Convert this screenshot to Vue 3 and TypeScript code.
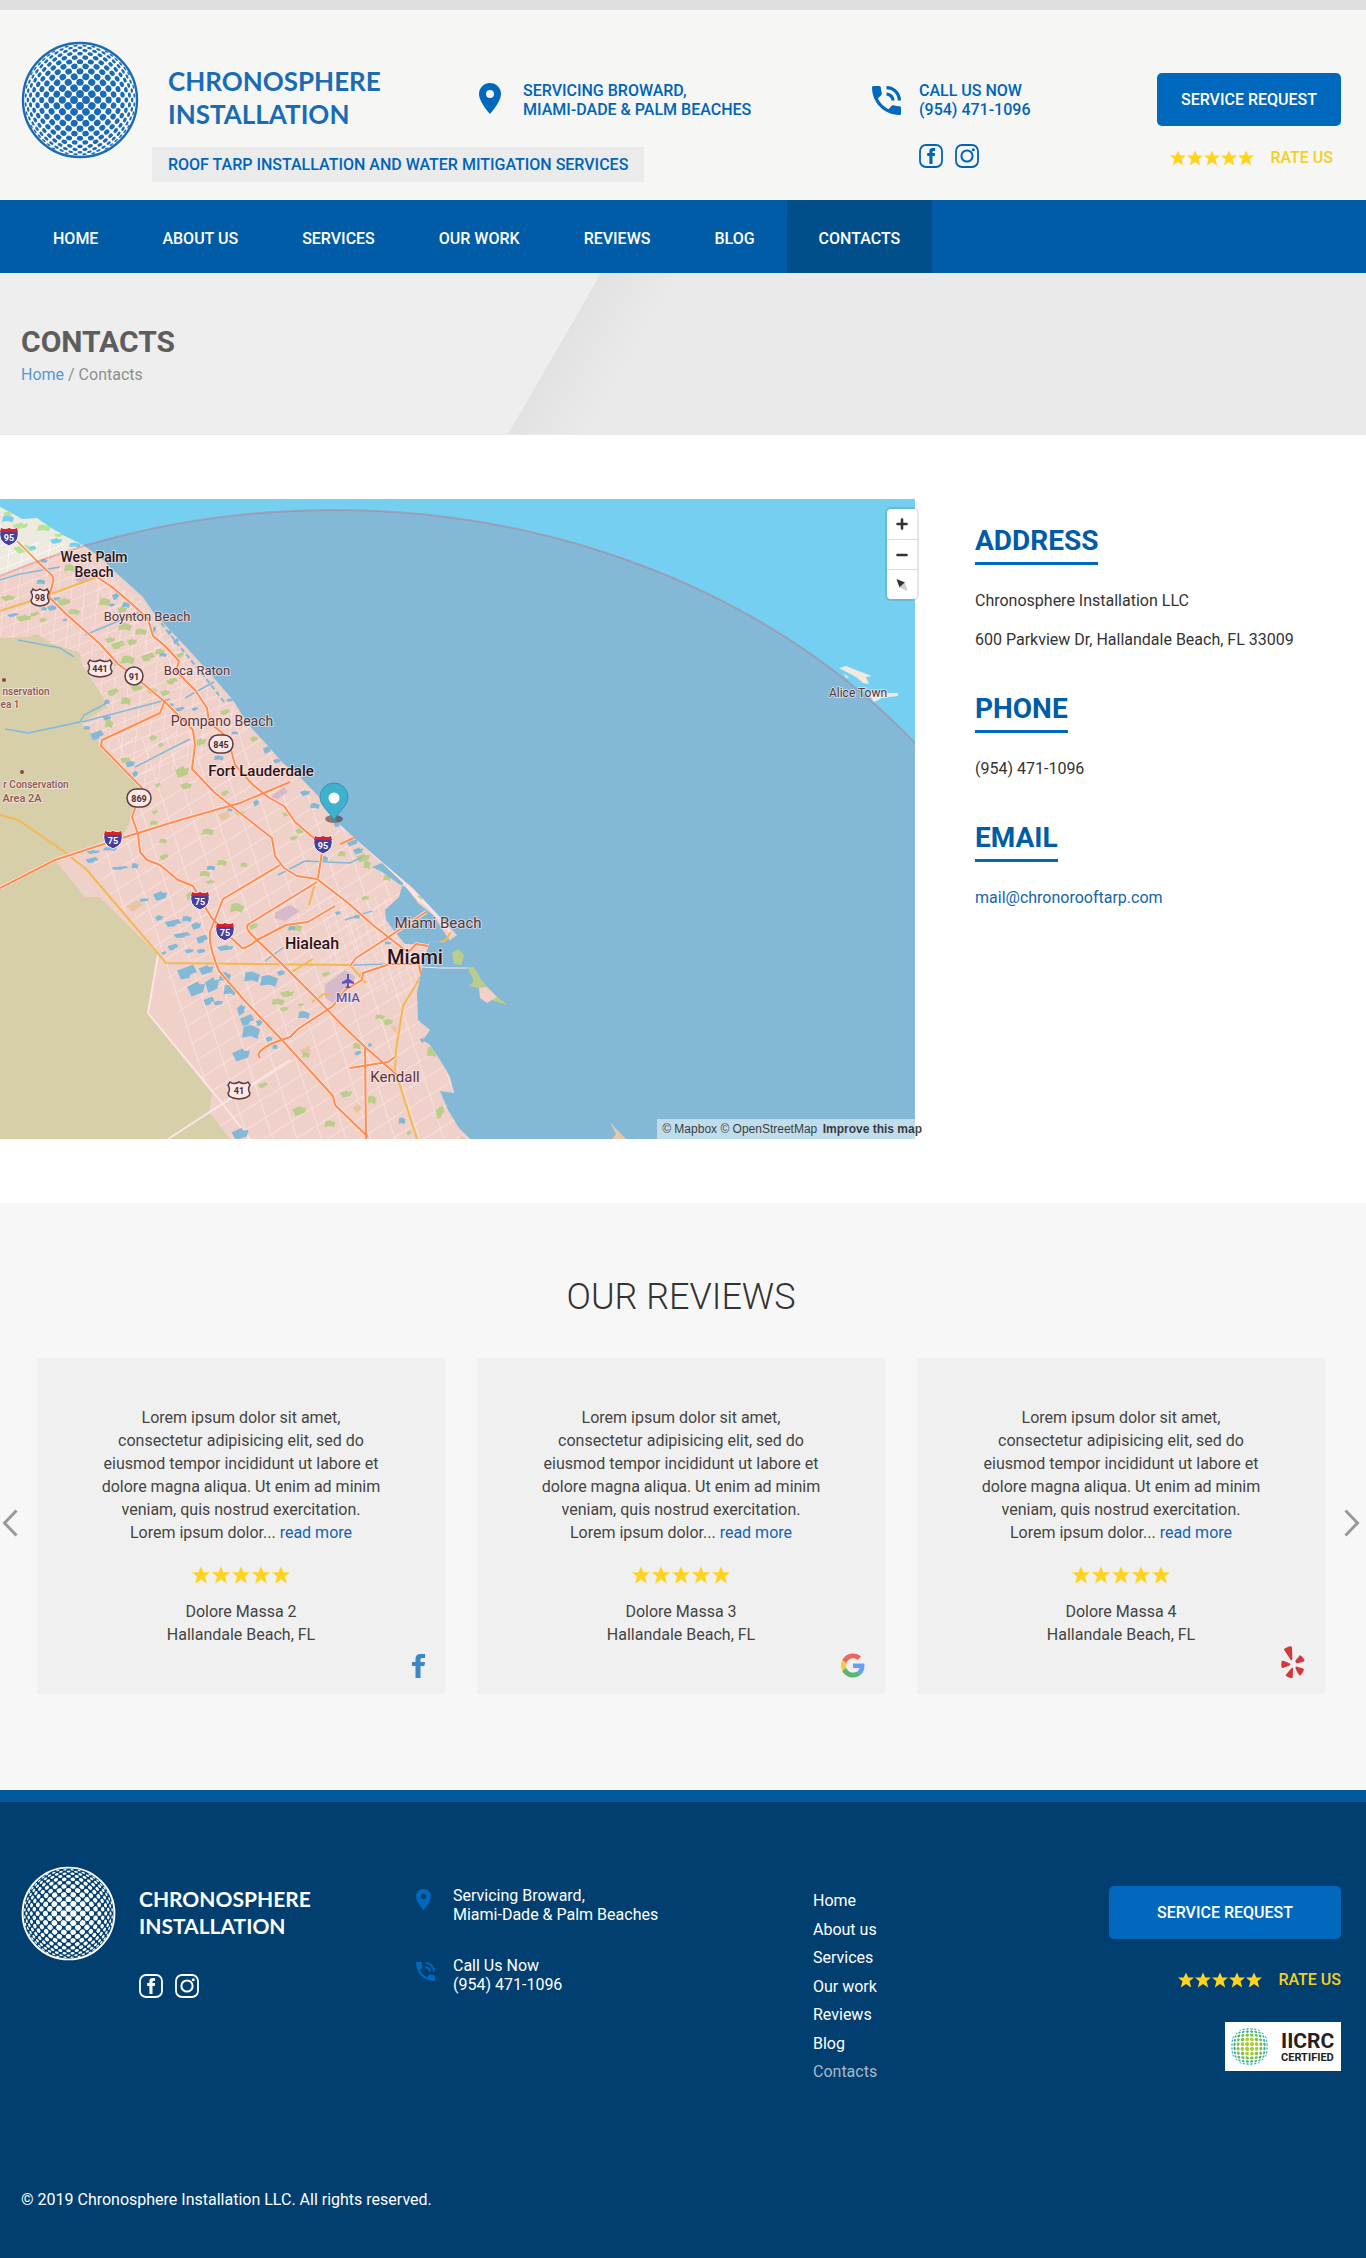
<script setup lang="ts">
interface Dot { x: number; y: number; rx: number; ry: number; a: number; c: string }
interface Label { t: string; x: number; y: number; s: number; k: string }
interface Shield { t: string; x: number; y: number }

/* Projects a flat lattice of dots onto a sphere of the given radius. */
function sphere(radius: number, step: number, dot: number, staggered: boolean, colour: (t: number) => string): Dot[] {
  const out: Dot[] = []
  const n = Math.ceil((radius * 1.55) / step)
  for (let i = -n; i <= n; i++) {
    for (let j = -n; j <= n; j++) {
      if (staggered && (i + j) % 2 === 0) continue
      const px = (staggered ? i : i + 0.5) * step
      const py = (staggered ? j : j + 0.5) * step
      const d = Math.hypot(px, py)
      const t = d / radius
      if (t > 1.36) continue
      const r = radius * Math.sin(t)
      const k = d === 0 ? 1 : r / d
      const shrink = 1 - t * 0.2
      out.push({
        x: px * k,
        y: py * k,
        rx: Math.max(dot * Math.cos(t) * shrink, 0.35),
        ry: dot * k * shrink,
        a: (Math.atan2(py, px) * 180) / Math.PI,
        c: colour(t),
      })
    }
  }
  return out
}

const globe = sphere(57, 6, 4, true, () => 'currentColor')
const badgeGlobe = sphere(20, 5, 2.2, false, (t) => (t < 0.5 ? '#a6cf2f' : t < 0.85 ? '#79bf4f' : t < 1.15 ? '#2fb08c' : '#2aa9c9'))

const nav = ['Home', 'About us', 'Services', 'Our work', 'Reviews', 'Blog', 'Contacts']
const info = [
  { title: 'Address', lines: ['Chronosphere Installation LLC', '600 Parkview Dr, Hallandale Beach, FL 33009'] },
  { title: 'Phone', lines: ['(954) 471-1096'] },
]
const reviews = [
  { name: 'Dolore Massa 2', source: 'facebook', w: 13, h: 24 },
  { name: 'Dolore Massa 3', source: 'google', w: 24, h: 25 },
  { name: 'Dolore Massa 4', source: 'yelp', w: 24, h: 32 },
]

const labels: Label[] = [
  { t: 'West Palm', x: 94, y: 562, s: 14, k: 'city' },
  { t: 'Beach', x: 94, y: 577, s: 14, k: 'city' },
  { t: 'Boynton Beach', x: 147, y: 621, s: 13, k: 'town' },
  { t: 'Boca Raton', x: 197, y: 675, s: 13, k: 'town' },
  { t: 'Pompano Beach', x: 222, y: 726, s: 14, k: 'town' },
  { t: 'Fort Lauderdale', x: 261, y: 776, s: 15, k: 'city' },
  { t: 'Hialeah', x: 312, y: 949, s: 16, k: 'city' },
  { t: 'Miami Beach', x: 438, y: 928, s: 15, k: 'town' },
  { t: 'Miami', x: 415, y: 964, s: 20, k: 'city' },
  { t: 'MIA', x: 348, y: 1002, s: 13, k: 'air' },
  { t: 'Kendall', x: 395, y: 1082, s: 15, k: 'town' },
  { t: 'Alice Town', x: 858, y: 697, s: 12, k: 'town' },
  { t: 'nservation', x: 26, y: 695, s: 10, k: 'area' },
  { t: 'ea 1', x: 10, y: 708, s: 10, k: 'area' },
  { t: 'r Conservation', x: 36, y: 788, s: 10, k: 'area' },
  { t: 'Area 2A', x: 22, y: 802, s: 11, k: 'area' },
]
const interstates: Shield[] = [
  { t: '95', x: 9, y: 536 }, { t: '75', x: 113, y: 839 }, { t: '75', x: 200, y: 900 },
  { t: '75', x: 225, y: 931 }, { t: '95', x: 323, y: 844 },
]
const usRoutes = [
  { t: '98', x: 40, y: 597, w: 9 }, { t: '441', x: 100, y: 668, w: 12 }, { t: '41', x: 239, y: 1090, w: 11 },
]
const stateRoutes = [
  { t: '91', x: 134, y: 676, w: 9 }, { t: '845', x: 221, y: 744, w: 12 }, { t: '869', x: 139, y: 798, w: 12 },
]

/* Parks and lakes: centre, width, height. */
const parks: number[][] = [
  [8, 514, 10, 6], [20, 526, 16, 7], [44, 528, 14, 7], [24, 549, 22, 9], [10, 542, 14, 7], [60, 535, 12, 4],
  [70, 568, 12, 8], [8, 598, 14, 6], [24, 618, 16, 7], [35, 614, 10, 5], [64, 602, 14, 8], [74, 612, 12, 6],
  [43, 620, 8, 5], [105, 602, 12, 8], [122, 610, 10, 7], [133, 616, 12, 6], [125, 627, 14, 8], [141, 632, 12, 7],
  [110, 640, 10, 6], [118, 645, 14, 9], [132, 642, 10, 7], [148, 657, 14, 9], [160, 652, 10, 6], [128, 660, 14, 9],
  [118, 664, 8, 6], [113, 692, 12, 8], [126, 701, 10, 8], [137, 688, 12, 7], [152, 691, 10, 6], [165, 693, 10, 6],
  [172, 681, 12, 7], [180, 655, 8, 6], [109, 724, 8, 9], [225, 712, 10, 6], [153, 738, 8, 6], [161, 745, 6, 5],
  [200, 742, 12, 8], [254, 739, 8, 6], [125, 760, 10, 6], [182, 772, 14, 12], [186, 786, 12, 7], [158, 785, 6, 5],
  [225, 793, 8, 6], [240, 813, 10, 5], [287, 814, 10, 5], [155, 812, 6, 5], [154, 823, 8, 5], [208, 832, 12, 7],
  [163, 841, 8, 5], [164, 857, 9, 7], [222, 863, 10, 6], [205, 874, 11, 6], [210, 882, 10, 4], [244, 865, 7, 5],
  [300, 831, 10, 6], [294, 838, 9, 5], [342, 854, 8, 6], [363, 858, 14, 9], [367, 865, 7, 9], [387, 878, 8, 6],
  [365, 898, 8, 5], [190, 896, 8, 9], [237, 908, 14, 10], [253, 926, 9, 8], [295, 928, 15, 7], [326, 974, 9, 5],
  [287, 994, 14, 7], [278, 1002, 13, 7], [284, 1009, 9, 5], [301, 1005, 6, 4], [380, 1017, 10, 5], [388, 1022, 10, 7],
  [357, 1046, 8, 7], [306, 1055, 8, 6], [263, 1085, 10, 6], [346, 1094, 12, 7], [372, 1100, 9, 9], [299, 1111, 14, 10],
  [330, 1124, 11, 7], [432, 1052, 10, 11], [440, 1112, 9, 14], [362, 975, 6, 5], [409, 1133, 5, 5], [418, 898, 9, 5],
]
const lakes: number[][] = [
  [8, 519, 12, 7], [28, 516, 16, 5], [56, 541, 12, 6], [33, 548, 7, 4], [75, 545, 12, 5], [44, 561, 7, 4],
  [41, 582, 9, 5], [52, 608, 10, 6], [13, 615, 12, 4], [44, 609, 6, 4], [56, 599, 10, 4], [65, 620, 5, 3],
  [116, 596, 8, 8], [126, 605, 8, 6], [112, 605, 6, 4], [154, 630, 4, 9], [176, 641, 6, 6], [170, 632, 5, 6],
  [163, 655, 8, 4], [107, 702, 6, 5], [107, 718, 9, 5], [87, 728, 7, 4], [97, 735, 14, 10], [180, 709, 10, 5],
  [195, 709, 7, 4], [171, 705, 6, 4], [230, 700, 8, 4], [219, 758, 10, 5], [130, 764, 10, 7], [135, 774, 6, 7],
  [267, 750, 8, 8], [277, 761, 8, 5], [256, 803, 6, 7], [305, 793, 10, 6], [315, 806, 10, 6], [230, 810, 5, 3],
  [235, 733, 7, 3], [93, 852, 14, 4], [92, 860, 13, 6], [110, 849, 14, 4], [120, 868, 18, 4], [135, 866, 7, 6],
  [144, 900, 10, 4], [160, 896, 14, 10], [159, 918, 8, 6], [173, 923, 17, 8], [187, 919, 10, 6], [196, 926, 10, 8],
  [182, 935, 18, 6], [202, 939, 12, 9], [173, 947, 11, 7], [189, 951, 9, 5], [201, 951, 9, 5], [225, 948, 17, 6],
  [164, 953, 5, 4], [187, 972, 20, 15], [206, 970, 15, 10], [196, 989, 18, 15], [212, 985, 14, 16], [225, 977, 12, 10],
  [230, 990, 13, 11], [209, 1001, 11, 9], [218, 1003, 10, 5], [252, 977, 16, 11], [269, 981, 18, 12], [281, 973, 8, 6],
  [241, 1010, 8, 12], [247, 1020, 14, 12], [251, 1032, 18, 14], [260, 1022, 8, 8], [269, 1039, 7, 6], [275, 1047, 5, 5],
  [241, 1055, 18, 13], [304, 1015, 12, 8], [338, 913, 6, 4], [357, 917, 6, 4], [292, 928, 7, 5], [211, 868, 9, 5],
  [358, 1053, 7, 5], [370, 1045, 4, 4], [402, 1121, 7, 7], [240, 1134, 17, 12], [338, 824, 9, 6], [352, 842, 12, 9],
  [358, 851, 10, 7], [325, 859, 6, 6], [424, 1040, 9, 5], [388, 943, 7, 3],
]

const outlines = [
  [[-0.5, -0.15], [0.1, -0.5], [0.2, -0.3], [0.5, -0.35], [0.4, 0.2], [-0.25, 0.5]],
  [[-0.5, -0.1], [0.3, -0.5], [0.5, 0], [0.2, 0.15], [0.1, 0.4], [-0.3, 0.5]],
  [[-0.4, -0.4], [0, -0.5], [0.5, -0.2], [0.35, 0.5], [0, 0.3], [-0.5, 0.4]],
]
function blob([x, y, w, h]: number[]): string {
  return outlines[(x * 7 + y * 13) % 3].map(([u, v]) => `${x + u * w},${y + v * h}`).join(' ')
}

const freeways = [
  'M17 541 L46 570 Q55 576 53 582 L49 597 L66 614 L100 644 L118 664 L134 676 L165 702 L193 730 L195 745 L192 769 L215 793 L240 813 L272 838 L275 856 L284 868 L297 876 L317 879 L348 903 L374 926 L405 950',
  'M97 577 L112 587 L133 605 L148 619 L153 636 L165 646 L179 661 L176 671 L195 690 L207 708 L209 722 L228 738 L235 765 L253 785 L268 797 L284 806 L295 822 L323 846 L318 878',
  'M165 700 L160 713 L102 740 L101 746 L142 788 L132 817 L138 834 L140 852 L147 860 L160 865 L178 880 L193 886 L211 917 L225 932 L242 948 Q248 948 257 940 L286 925 L308 922 L335 906',
  'M0 888 L55 860 L122 838 L180 820 L240 803 L290 782',
  'M280 865 L223 899 L210 932 Q208 945 219 971 L244 1000 L282 1040 L333 1096 L335 1105 L368 1137',
  'M317 882 L249 924 Q243 927 255 938 L283 965 L318 1000 L342 1025 L365 1047 L397 1075',
  'M365 1047 L366 1139',
  'M350 1068 L388 1062 L395 1057',
  'M260 1058 Q254 1052 273 1043 L290 1037 L298 1029 L333 1006 L345 990 L362 980 L363 973 L390 964 L419 964 L421 975',
  'M350 966 L356 958 L384 940 L426 912',
  'M406 955 L416 944 L434 947',
  'M340 844 L356 837',
]
const highways = [
  'M0 815 L18 820 L62 850 L86 869 L166 963 L350 965 L366 983 M290 973 L313 959 M312 1002 L324 994 L330 995',
  'M421 976 L403 1006 L396 1050 L395 1070 L417 1139',
  'M309 905 L316 880 M430 946 L446 940 L451 932 M421 976 H428',
  'M0 611 L40 598 L100 576',
]
</script>

<template>
  <svg class="sprite" aria-hidden="true">
    <symbol id="i-globe" viewBox="-59 -59 118 118">
      <circle r="57" fill="var(--globe-bg)" stroke="currentColor" stroke-width="2.4" />
      <ellipse v-for="(d, i) in globe" :key="i" :rx="d.rx" :ry="d.ry" :fill="d.c" :transform="`translate(${d.x} ${d.y}) rotate(${d.a})`" />
    </symbol>
    <symbol id="i-pin" viewBox="0 0 22 31"><path fill="currentColor" fill-rule="evenodd" d="M11 0a11 11 0 0 0-11 11c0 8 11 20 11 20s11-12 11-20A11 11 0 0 0 11 0zm0 15a4 4 0 1 1 0-8 4 4 0 0 1 0 8z" /></symbol>
    <symbol id="i-phone" viewBox="0 0 18 18"><path fill="currentColor" d="M17 12.5c-1.25 0-2.45-.2-3.57-.57-.35-.11-.74-.03-1.02.24l-2.2 2.2a15.05 15.05 0 0 1-6.59-6.59l2.2-2.2c.28-.28.36-.67.25-1.02A11.4 11.4 0 0 1 5.5 1c0-.55-.45-1-1-1H1C.45 0 0 .45 0 1c0 9.39 7.61 17 17 17 .55 0 1-.45 1-1v-3.5c0-.55-.45-1-1-1zM16 9h2A9 9 0 0 0 9 0v2a7 7 0 0 1 7 7zm-4 0h2c0-2.76-2.24-5-5-5v2c1.66 0 3 1.34 3 3z" /></symbol>
    <symbol id="i-fb-box" viewBox="0 0 24 24"><rect x="1" y="1" width="22" height="22" rx="6" fill="none" stroke="currentColor" stroke-width="1.8" /><path fill="currentColor" d="M10.4 20v-8H8.200V9h2.200V7.300C10.400 5 11.500 4 13.600 4h2.500v3h-1.500c-.8 0-1.100.3-1.100 1v1h2.600l-.3 3h-2.300v8z" /></symbol>
    <symbol id="i-insta" viewBox="0 0 24 24"><rect x="1" y="1" width="22" height="22" rx="6" fill="none" stroke="currentColor" stroke-width="1.8" /><circle cx="12" cy="12" r="5.600" fill="none" stroke="currentColor" stroke-width="2" /><circle cx="18.300" cy="5.700" r="1.500" fill="currentColor" /></symbol>
    <symbol id="i-star" viewBox="0 0 18 17"><path fill="currentColor" d="M9 0l2.500 5.800H18l-5 4.200L14.800 17 9 13l-5.800 4L5 10 0 5.800h6.500z" /></symbol>
    <symbol id="i-facebook" viewBox="0 0 13 24"><path fill="#3b87c8" d="M3.500 24V12H0V8h3.500V5.500C3.500 1.700 5.300 0 8.800 0H13v4h-2.500C8.900 4 8.500 4.600 8.500 6v2H13l-.6 4H8.500v12z" /></symbol>
    <symbol id="i-google" viewBox="0 0 48 48">
      <path fill="#ed665c" d="M24 9.500c3.540 0 6.710 1.220 9.210 3.600l6.850-6.850C35.900 2.380 30.470 0 24 0 14.620 0 6.510 5.380 2.560 13.220l7.980 6.190C12.430 13.720 17.740 9.500 24 9.500z" />
      <path fill="#669df6" d="M46.980 24.550c0-1.570-.15-3.090-.38-4.550H24v9.020h12.940c-.58 2.960-2.260 5.480-4.780 7.180l7.730 6c4.510-4.180 7.090-10.360 7.090-17.650z" />
      <path fill="#f9c846" d="M10.530 28.590A14.500 14.500 0 0 1 9.770 24c0-1.600.27-3.140.76-4.590l-7.980-6.190A23.900 23.900 0 0 0 0 24c0 3.870.92 7.540 2.560 10.780z" />
      <path fill="#5ab572" d="M24 48c6.480 0 11.930-2.130 15.890-5.810l-7.730-6c-2.150 1.450-4.920 2.300-8.160 2.300-6.260 0-11.570-4.220-13.470-9.910l-7.980 6.190C6.510 42.620 14.620 48 24 48z" />
    </symbol>
    <symbol id="i-yelp" viewBox="0 0 24 32"><path fill="#d3393b" d="M3 3.500C2.500 2.500 9.500-.5 10.500.3c.8.600 1 12 .8 13-.2 1-1.200 1.200-1.900.2zM1 15c.5-.8 7 2 8 2.800.6.600.5 1.400-.4 1.700L1.800 22C0 22.500-.2 17 1 15zM14.700 16c-.5-.7-.300-1.200 0-1.700l4-4.800c1-1 4.700 3.600 4.900 5.300.1.900-6.900 2.400-7.800 2.500-.5 0-.9-.8-1.100-1.300zM15.500 20.500l7 2.300c1.300.6-1.500 6-3.500 6.700-1 .3-4.300-6.300-4.500-7.200-.1-1 .3-1.700 1-1.800zM10.500 22.200c.7-.7 1.700-.3 1.600.6 0 1-.200 8.500-.6 8.900-.9.900-6.300-1-6.700-2.300-.2-.8 5-6.500 5.700-7.200z" /></symbol>
    <symbol id="i-chevron" viewBox="0 0 16 28"><path fill="none" stroke="currentColor" stroke-width="3" d="M14.500 1.500L2.500 14l12 12.500" /></symbol>
  </svg>

  <div class="page">
    <header class="header">
      <a href="#" class="globe" aria-label="Chronosphere Installation"><svg><use href="#i-globe" /></svg></a>
      <div class="brand">CHRONOSPHERE<br>INSTALLATION</div>
      <p class="tagline">ROOF TARP INSTALLATION AND WATER MITIGATION SERVICES</p>
      <div class="fact area-served">
        <svg class="pin"><use href="#i-pin" /></svg>
        <span>SERVICING BROWARD,<br>MIAMI-DADE &amp; PALM BEACHES</span>
      </div>
      <div class="fact call">
        <svg class="phone"><use href="#i-phone" /></svg>
        <span>CALL US NOW<br>(954) 471-1096</span>
      </div>
      <div class="social head-social">
        <a href="#" aria-label="Facebook"><svg><use href="#i-fb-box" /></svg></a>
        <a href="#" aria-label="Instagram"><svg><use href="#i-insta" /></svg></a>
      </div>
      <button type="button" class="request">SERVICE REQUEST</button>
      <a href="#" class="rate"><span class="stars"><svg v-for="n in 5" :key="n"><use href="#i-star" /></svg></span>RATE US</a>
    </header>

    <nav class="nav">
      <a v-for="item in nav" :key="item" href="#" :class="{ active: item === 'Contacts' }">{{ item.toUpperCase() }}</a>
    </nav>

    <section class="hero">
      <h1>CONTACTS</h1>
      <p class="crumbs"><a href="#">Home</a> / Contacts</p>
    </section>

    <main class="contact">
      <div class="map">
        <svg class="canvas" viewBox="0 499 915 640" preserveAspectRatio="xMinYMin slice" role="img" aria-label="Map of the service area">
          <defs>
            <pattern id="grid-north" width="15" height="11" patternUnits="userSpaceOnUse" patternTransform="rotate(-22) skewX(-28)"><path d="M0 0H15M0 0V11" stroke="#fff" stroke-width="1.300" fill="none" /></pattern>
            <pattern id="grid-south" width="24" height="17" patternUnits="userSpaceOnUse" patternTransform="rotate(-32) skewX(-14)"><path d="M0 0H24M0 0V17" stroke="#fff" stroke-width="1.500" fill="none" /></pattern>
            <pattern id="grid-fine" width="9" height="8" patternUnits="userSpaceOnUse" patternTransform="rotate(-32) skewX(-14)"><path d="M0 0H9M0 0V8" stroke="#fff" stroke-width="1" fill="none" /></pattern>
            <clipPath id="land-clip"><path d="M0 507L10 512L22 519L37 518L50 527L63 535L83 545L100 557L113 570L133 588L143 597L153 612L167 627L187 648L213 677L233 700L247 723L267 745L283 763L300 777L320 798L333 818L353 837L383 863L413 888L433 910L457 935L446 943L430 941L422 967L417 993L418 1020L430 1030L423 1040L430 1045L440 1060L450 1077L454 1093L440 1091L448 1110L459 1128L470 1139H0Z" /></clipPath>
          </defs>
          <rect y="499" width="915" height="640" fill="#75cff0" />
          <g clip-path="url(#land-clip)">
            <rect y="499" width="480" height="640" fill="#efeae0" />
            <path d="M0 540L83 545L250 725L140 790L0 700Z" fill="url(#grid-north)" />
            <path d="M100 740L250 725L333 818L470 960V1139H225L158 955L90 870L140 790Z" fill="url(#grid-south)" />
            <path d="M330 890L400 900L420 965L410 1000L370 990L320 960ZM85 560L140 600L215 690L180 690L110 610Z" fill="url(#grid-fine)" />
            <path d="M0 638L28 637L37 634L50 643L80 653L82 665L90 677L103 697L107 707L82 723L100 743L128 770L142 787L132 818L123 835L55 860L85 897H100L158 955L148 1013L212 1093L209 1112L230 1139H0Z" fill="#d2e8bd" />
            <path d="M168 1139L225 1102L290 1060M158 955L148 1013L222 1103L250 1139M333 818L383 863L433 910L452 934" stroke="#fff" stroke-width="2" fill="none" />
            <path d="M276 912L290 905L300 911L285 921L274 918ZM325 985L345 970L356 977L333 1003L325 998ZM270 797L284 787L288 792L276 800ZM75 580L86 574L92 577L80 583Z" fill="#d4d0e0" />
            <path d="M127 906L138 900L143 905L132 912ZM218 815L228 811L230 817L222 821ZM300 1050L309 1046L311 1051L304 1056ZM353 1108L359 1104L362 1109L356 1113ZM390 1025L397 1027L396 1034Z" fill="#e6ddb2" />
            <polygon v-for="(b, i) in parks" :key="'p' + i" :points="blob(b)" fill="#b4e599" />
            <polygon v-for="(b, i) in lakes" :key="'l' + i" :points="blob(b)" fill="#75cff0" />
            <path d="M372 867L382 863L403 883L399 897L385 910L386 920L395 932L405 944H452L433 915L418 903L407 888L399 884L382 872Z" fill="#75cff0" />
            <path d="M407 886L417 898L428 906L448 928" stroke="#fff" stroke-width="3" fill="none" />
            <path d="M5 729L28 733L80 722L84 715L107 703M0 580L20 574L60 567M82 722L170 699M18 640L60 648L74 657M85 635L140 612M135 767L190 739M185 698L214 682M278 875L305 861L350 863L362 857M353 965L392 964M345 920L372 911M265 961L284 947" stroke="#75cff0" stroke-width="1.500" fill="none" />
            <path d="M150 602L157 618L172 637L190 659L207 680L225 703" stroke="#75cff0" stroke-width="2" stroke-dasharray="5 3" fill="none" />
            <path v-for="(d, i) in highways" :key="'h' + i" :d="d" fill="none" stroke="#f4ce58" stroke-width="2" />
            <g fill="none" stroke-linejoin="round"><path v-for="(d, i) in freeways" :key="'c' + i" :d="d" stroke="#fff" stroke-width="3.500" /><path v-for="(d, i) in freeways" :key="'f' + i" :d="d" stroke="#ff9d55" stroke-width="2" /></g>
          </g>
          <path d="M452 953L458 949L464 955L461 965L454 964Z" fill="#b4e599" />
          <path d="M422 967L440 968L467 968" stroke="#fff" stroke-width="1" fill="none" />
          <path d="M467 967L474 967L482 981L496 996L508 1005L494 1001L483 989L469 986L474 981Z" fill="#b4e599" />
          <path d="M479 988L487 987L497 997L487 1003L480 998Z" fill="#efeae0" />
          <path d="M610 1122L619 1132L626 1139H612L616 1134ZM460 1135L466 1139H460Z" fill="#e5dfb8" />
          <path d="M839 668L846 666L856 670L872 676L866 677L869 684L863 683L856 677ZM844 674L849 677L846 678ZM868 693H898V696L882 698L874 702Z" fill="#efeae0" />
          <ellipse cx="334" cy="1122" rx="740" ry="612" fill="rgba(247, 20, 30, 0.115)" stroke="rgba(230, 60, 70, 0.280)" stroke-width="2" />

          <g fill="#814b45"><circle cx="4" cy="680" r="2" /><circle cx="22" cy="772" r="2" /></g>
          <text v-for="l in labels" :key="l.t + l.y" :x="l.x" :y="l.y" :font-size="l.s" :class="['label', l.k]">{{ l.t }}</text>
          <path d="M347 974h2v5l5 3v2l-5-1v3l2 2h-6l2-2v-3l-5 1v-2l5-3z" fill="#5a55b5" />

          <g v-for="s in interstates" :key="s.t + s.x" :transform="`translate(${s.x} ${s.y})`">
            <path d="M-8-8Q-4-6 0-8Q4-6 8-8Q13 5 0 10Q-13 5-8-8Z" fill="#483f9c" stroke="#fff" stroke-width="1" /><path d="M-8-8Q-4-6 0-8Q4-6 8-8L9-4H-9Z" fill="#d5222b" />
            <text class="num light" y="5" font-size="9">{{ s.t }}</text>
          </g>
          <g v-for="s in usRoutes" :key="s.t" :transform="`translate(${s.x} ${s.y})`">
            <path :d="`M${-s.w + 2}-8Q${-s.w / 2}-5 0-8Q${s.w / 2}-5 ${s.w - 2}-8L${s.w}-5Q${s.w - 3} 0 ${s.w} 3Q${s.w} 8 0 9Q${-s.w} 8 ${-s.w} 3Q${-s.w + 3} 0 ${-s.w}-5Z`" class="plate" />
            <text class="num" y="4" font-size="9">{{ s.t }}</text>
          </g>
          <g v-for="s in stateRoutes" :key="s.t" :transform="`translate(${s.x} ${s.y})`">
            <rect :x="-s.w" y="-9" :width="s.w * 2" height="18" rx="9" class="plate" /><text class="num" y="4" font-size="9">{{ s.t }}</text>
          </g>

          <ellipse cx="334" cy="819" rx="9" ry="4" fill="rgba(60, 40, 40, 0.550)" />
          <path d="M334 821C331 812 320 807 320 797A14 14 0 0 1 348 797C348 807 337 812 334 821Z" fill="#3fb1ce" stroke="#3596b0" stroke-width="1" />
          <circle cx="334" cy="798" r="5.500" fill="#fff" />
        </svg>
        <div class="zoom">
          <button type="button" aria-label="Zoom in"><svg viewBox="0 0 20 20"><path d="M10 5.500v9M5.500 10h9" stroke="#333" stroke-width="2.600" stroke-linecap="round" /></svg></button>
          <button type="button" aria-label="Zoom out"><svg viewBox="0 0 20 20"><path d="M5.500 10h9" stroke="#333" stroke-width="2.600" stroke-linecap="round" /></svg></button>
          <button type="button" aria-label="Reset bearing to north"><svg viewBox="0 0 20 20"><path d="M4.500 4l8.500 3.500-5.500 5z" fill="#333" /><path d="M15.500 16l-2.500-8.500-5.500 5z" fill="#ccc" /></svg></button>
        </div>
        <p class="credits"><a href="#">© Mapbox</a> <a href="#">© OpenStreetMap</a> <a href="#" class="improve">Improve this map</a></p>
      </div>

      <div class="info">
        <section v-for="block in info" :key="block.title">
          <h2>{{ block.title.toUpperCase() }}</h2>
          <p v-for="line in block.lines" :key="line">{{ line }}</p>
        </section>
        <section>
          <h2>EMAIL</h2>
          <p><a href="mailto:mail@chronorooftarp.com">mail@chronorooftarp.com</a></p>
        </section>
      </div>
    </main>

    <section class="reviews">
      <h2>OUR REVIEWS</h2>
      <div class="slider">
        <button type="button" class="arrow" aria-label="Previous reviews"><svg><use href="#i-chevron" /></svg></button>
        <div class="cards">
          <article v-for="r in reviews" :key="r.name" class="card">
            <p>Lorem ipsum dolor sit amet, consectetur adipisicing elit, sed do eiusmod tempor incididunt ut labore et dolore magna aliqua. Ut enim ad minim veniam, quis nostrud exercitation. Lorem ipsum dolor... <a href="#">read more</a></p>
            <span class="stars big"><svg v-for="n in 5" :key="n"><use href="#i-star" /></svg></span>
            <p>{{ r.name }}<br>Hallandale Beach, FL</p>
            <svg class="source" :width="r.w" :height="r.h"><use :href="'#i-' + r.source" /></svg>
          </article>
        </div>
        <button type="button" class="arrow next" aria-label="Next reviews"><svg><use href="#i-chevron" /></svg></button>
      </div>
    </section>

    <footer class="footer">
      <div class="foot-grid">
        <div class="foot-brand">
          <a href="#" class="globe" aria-label="Chronosphere Installation"><svg><use href="#i-globe" /></svg></a>
          <div>
            <div class="brand">CHRONOSPHERE<br>INSTALLATION</div>
            <div class="social">
              <a href="#" aria-label="Facebook"><svg><use href="#i-fb-box" /></svg></a>
              <a href="#" aria-label="Instagram"><svg><use href="#i-insta" /></svg></a>
            </div>
          </div>
        </div>
        <div class="foot-facts">
          <div class="fact"><svg class="pin"><use href="#i-pin" /></svg><span>Servicing Broward,<br>Miami-Dade &amp; Palm Beaches</span></div>
          <div class="fact"><svg class="phone"><use href="#i-phone" /></svg><span>Call Us Now<br>(954) 471-1096</span></div>
        </div>
        <ul class="foot-links">
          <li v-for="item in nav" :key="item"><a href="#" :class="{ active: item === 'Contacts' }">{{ item }}</a></li>
        </ul>
        <div class="foot-side">
          <button type="button" class="request">SERVICE REQUEST</button>
          <a href="#" class="rate"><span class="stars"><svg v-for="n in 5" :key="n"><use href="#i-star" /></svg></span>RATE US</a>
          <div class="badge">
            <svg viewBox="-20 -20 40 40"><ellipse v-for="(d, i) in badgeGlobe" :key="i" :rx="d.rx" :ry="d.ry" :fill="d.c" :transform="`translate(${d.x} ${d.y}) rotate(${d.a})`" /></svg>
            <div><strong>IICRC</strong><span>CERTIFIED</span></div>
          </div>
        </div>
      </div>
      <p class="copyright">© 2019 Chronosphere Installation LLC. All rights reserved.</p>
    </footer>
  </div>
</template>

<style>
body { margin: 0; background: #fff; }
</style>

<style scoped>
.page, .page * { box-sizing: border-box; }
.page { font: 400 16px/23px Roboto, "Liberation Sans", sans-serif; color: #333; overflow-x: hidden; }
p, h1, h2, ul { margin: 0; padding: 0; }
a { text-decoration: none; }
svg { display: block; }
button { font-family: inherit; border: 0; cursor: pointer; }
.sprite { position: absolute; width: 0; height: 0; }

.header {
  display: grid;
  grid-template-columns: 131px minmax(0, 327fr) minmax(0, 393fr) minmax(0, 285fr) 184px;
  grid-template-rows: 103px 38px;
  border-top: 10px solid #dfdfdf;
  padding: 31px 25px 18px 21px;
  background: #f6f6f4;
  color: #0064b9;
}
.globe { --globe-bg: #fcfcfb; color: #196bb5; }
.header .globe { grid-column: 1; grid-row: 1 / 3; }
.header .globe svg { width: 118px; height: 118px; }
.brand { font: 700 26px/33px Lato, "Liberation Sans", sans-serif; color: #196bb5; white-space: nowrap; }
.header .brand { grid-column: 2; grid-row: 1; padding: 24px 0 0 16px; }
.tagline { grid-column: 2 / 4; grid-row: 2; justify-self: start; align-self: end; height: 35px; padding: 0 16px; line-height: 35px; font-weight: 500; background: #ebebeb; white-space: nowrap; }
.fact { display: flex; line-height: 19px; }
.header .fact { grid-row: 1; padding-top: 40px; font-weight: 500; }
.area-served { grid-column: 3; }
.call { grid-column: 4; }
.fact svg { flex: none; }
.pin { width: 22px; height: 31px; margin: 2px 22px 0 0; color: #0068bd; }
.phone { width: 29px; height: 29px; margin: 5px 18px 0 0; color: #0068bd; }
.social { display: flex; gap: 12px; }
.social svg { width: 24px; height: 24px; }
.social a { color: inherit; }
.head-social { grid-column: 4; grid-row: 2; padding-left: 47px; }
.request { height: 53px; border-radius: 5px; padding: 0; background: #0068bd; color: #fff; font-size: 16px; font-weight: 500; }
.header .request { grid-column: 5; grid-row: 1; margin-top: 32px; }
.rate { display: flex; align-items: center; gap: 16px; height: 24px; color: #f5cf1d; font-weight: 500; line-height: 24px; white-space: nowrap; }
.header .rate { grid-column: 5; grid-row: 2; justify-self: end; margin: 2px 8px 0 0; }
.stars { display: flex; gap: 1px; color: #ffd31f; }
.stars svg { width: 16px; height: 16px; }

.nav { display: flex; padding-left: 21px; background: #005ca6; }
.nav a { padding: 29px 32px 25px; line-height: 19px; font-weight: 500; color: #fff; }
.nav a.active { background: #004f8b; }

.hero { position: relative; padding: 51px 21px 48px; background: #eee; border-bottom: 1px solid #e9e9e9; }
.hero::before { content: ""; position: absolute; top: 0; right: 0; bottom: 0; left: 37.2%; background: linear-gradient(120deg, #e2e2e2 81px, #eaeaea 150px); clip-path: polygon(93px 0, 100% 0, 100% 100%, 0 100%); }
.hero h1 { font-size: 30px; line-height: 36px; font-weight: 700; color: #5d5d5d; }
.crumbs { margin-top: 3px; color: #8e8e8e; }
.crumbs a { color: #5599d3; }

.contact { display: grid; grid-template-columns: minmax(0, 927fr) minmax(0, 439fr); padding: 64px 0; }
.map { position: relative; height: 640px; }
.canvas { width: calc(100% - 12px); height: 640px; }
.label { font-family: Roboto, "Liberation Sans", sans-serif; text-anchor: middle; paint-order: stroke; stroke: rgba(255, 235, 235, 0.6); stroke-width: 2px; stroke-linejoin: round; }
.city { font-weight: 500; fill: #2b1418; }
.town { fill: #56363b; }
.air { font-weight: 500; fill: #5a55b5; }
.area { font-weight: 500; fill: #8b5852; }
.num { font-family: Roboto, "Liberation Sans", sans-serif; font-weight: 700; text-anchor: middle; fill: #4a2c30; }
.num.light { fill: #fff; }
.plate { fill: #fde8e6; stroke: #5b3d40; stroke-width: 1.5px; }
.zoom { position: absolute; top: 10px; right: 10px; width: 30px; border-radius: 4px; background: #fff; box-shadow: 0 0 0 2px rgba(0, 0, 0, 0.1); }
.zoom button { display: block; width: 30px; height: 30px; padding: 5px; background: none; }
.zoom button + button { border-top: 1px solid #ddd; }
.zoom svg { width: 20px; height: 20px; }
.credits { position: absolute; right: 0; bottom: 0; height: 20px; padding: 0 5px; background: rgba(255, 255, 255, 0.5); font: 12px/20px "Liberation Sans", sans-serif; white-space: nowrap; }
.credits a { color: rgba(0, 0, 0, 0.75); }
.credits .improve { margin-left: 2px; font-weight: 700; }

.info { padding: 25px 20px 0 48px; }
.info section { margin-bottom: 41px; }
.info h2 { display: table; margin-bottom: 24px; padding-bottom: 5px; border-bottom: 3px solid #0068bd; font-size: 28px; line-height: 33px; font-weight: 700; color: #005ca6; }
.info p + p { margin-top: 16px; }
.info a, .card a { color: #1463ac; }

.reviews { padding: 73px 0 96px; background: #f7f7f7; }
.reviews h2 { margin: 0 4px 40px 0; font-size: 36px; line-height: 42px; font-weight: 300; text-align: center; }
.slider { display: flex; align-items: stretch; }
.arrow { display: flex; align-items: center; flex: none; width: 37px; padding: 0 0 6px 2px; background: none; color: #999; }
.arrow svg { width: 16px; height: 28px; }
.next { width: 41px; padding: 0 6px 6px 0; justify-content: flex-end; }
.next svg { transform: scaleX(-1); }
.cards { flex: 1; display: grid; grid-template-columns: repeat(3, minmax(0, 1fr)); gap: 32px; }
.card { position: relative; padding: 48px 64px; background: #f0f0f0; color: #444; text-align: center; }
.big { justify-content: center; gap: 2px; padding: 22px 0 16px; }
.big svg { width: 18px; height: 18px; }
.source { position: absolute; right: 20px; bottom: 16px; }

.footer { border-top: 12px solid #00599d; padding: 64px 25px 47px 21px; background: #003f70; color: #fff; }
.foot-grid { display: grid; grid-template-columns: minmax(0, 395fr) minmax(0, 397fr) minmax(0, 296fr) 232px; }
.foot-brand { display: flex; gap: 23px; }
.footer .globe { --globe-bg: #003f70; color: #fff; }
.foot-brand .globe svg { width: 95px; height: 95px; }
.footer .brand { margin: 19px 0 35px; font-size: 21px; line-height: 27px; color: #fff; }
.foot-facts { display: flex; flex-direction: column; gap: 32px; padding-top: 20px; }
.footer .pin { width: 15px; height: 21px; margin: 3px 22px 0 0; }
.footer .phone { width: 19px; height: 19px; margin: 6px 18px 0 0; }
.foot-links { display: flex; flex-direction: column; justify-content: space-between; height: 194px; margin-top: 23px; list-style: none; }
.foot-links a { color: #fff; }
.foot-links .active { color: #a6b9ca; }
.foot-side { display: flex; flex-direction: column; align-items: flex-end; padding-top: 20px; }
.foot-side .request { width: 100%; }
.foot-side .rate { margin: 29px 0 30px; }
.badge { display: flex; gap: 12px; align-items: center; width: 116px; height: 49px; padding-left: 5px; background: #fff; color: #222; }
.badge svg { flex: none; width: 39px; height: 39px; }
.badge strong, .badge span { display: block; font-weight: 700; }
.badge strong { font-size: 21px; line-height: 22px; }
.badge span { font-size: 11px; line-height: 12px; }
.copyright { margin-top: 105px; }
</style>
